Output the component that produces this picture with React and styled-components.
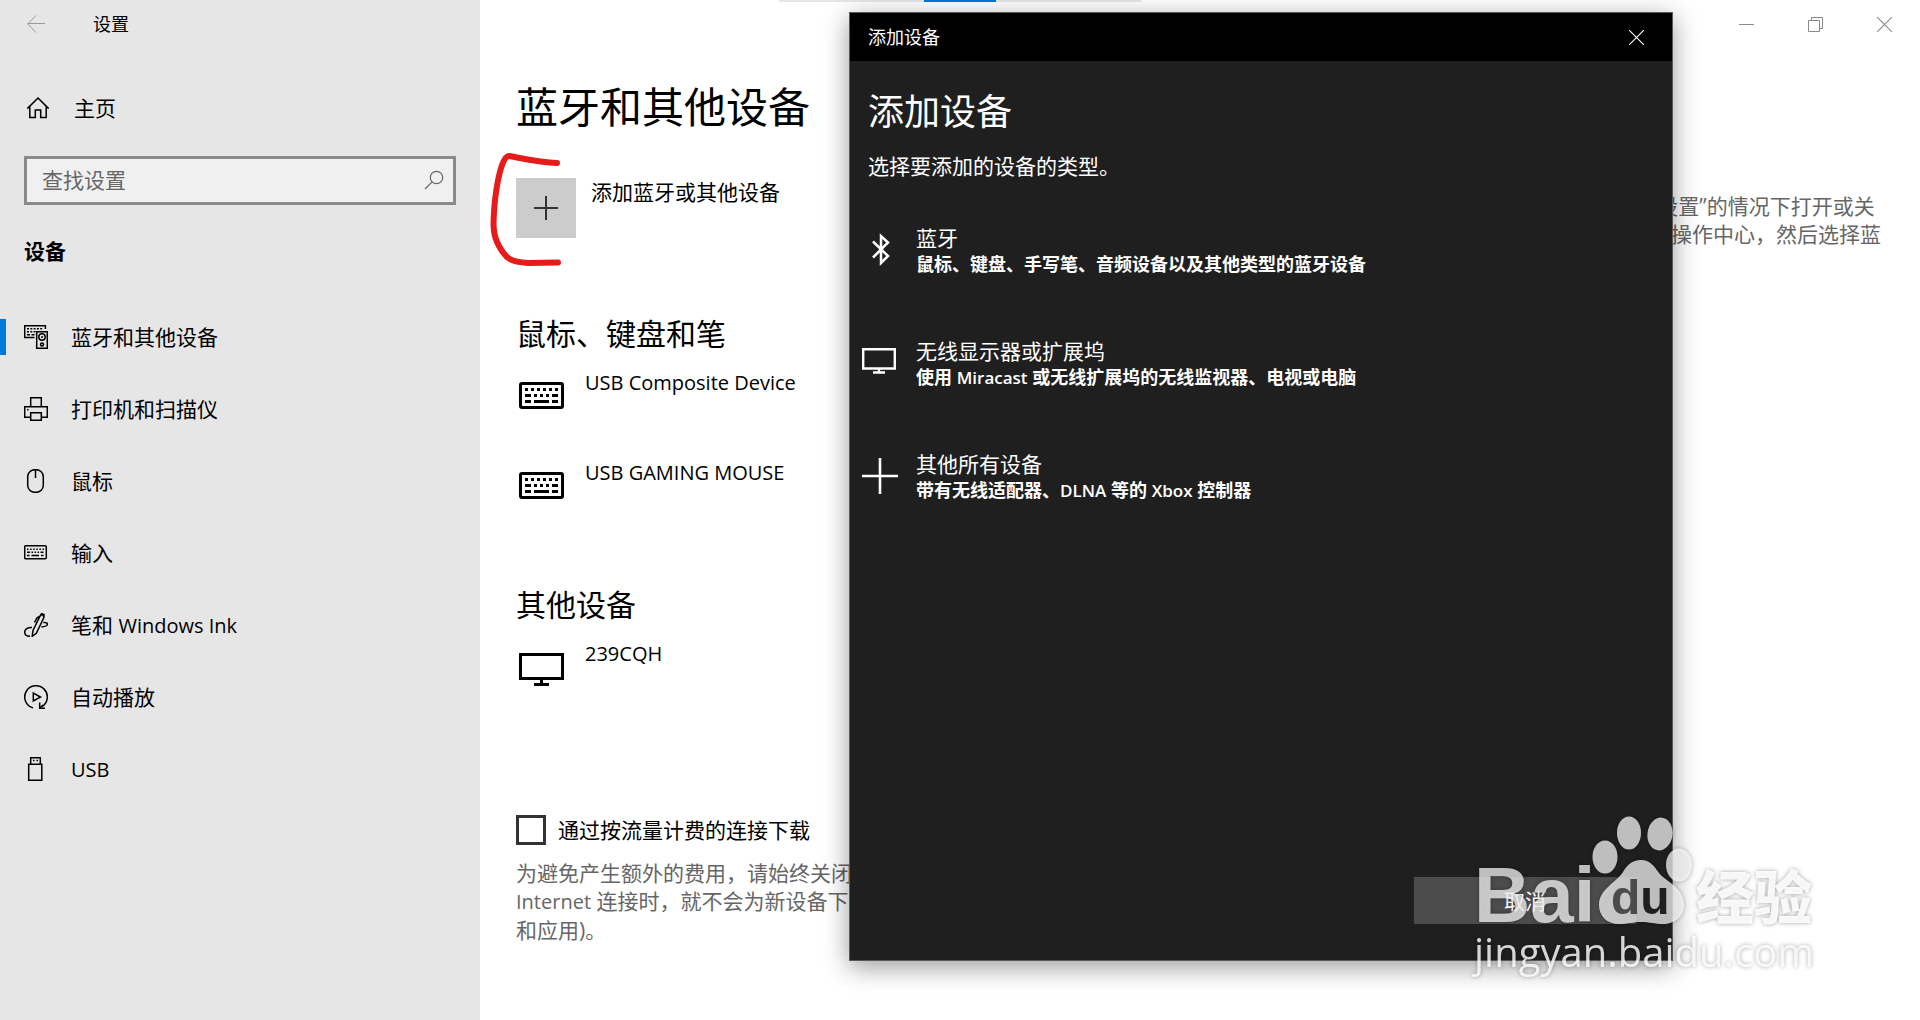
import React, { useState } from 'react';
import styled, { createGlobalStyle } from 'styled-components';

const GlobalStyle = createGlobalStyle`
  * {
    box-sizing: border-box;
  }

  body {
    margin: 0;
    background: #fff;
    color: #000;
    font-family: 'Open Sans', 'Noto Sans CJK SC', sans-serif;
    font-size: 21px;
    line-height: 28px;
  }

  button,
  input {
    font: inherit;
    color: inherit;
  }

  button {
    padding: 0;
    border: 0;
    background: none;
    text-align: left;
  }

  h1, h2, h3, p, ul {
    margin: 0;
    padding: 0;
    font-weight: 400;
  }

  svg {
    display: block;
    flex: none;
  }
`;

const Page = styled.div`
  position: relative;
  display: flex;
  min-height: 100vh;
  overflow: hidden;
`;

const TopStrip = styled.div`
  position: absolute;
  top: 0;
  left: 50%;
  display: flex;
  justify-content: center;
  width: 362px;
  height: 2px;
  margin-left: -181px;
  background: #e6e6e6;
`;

const TopStripThumb = styled.div`
  width: 72px;
  background: #0078d7;
`;

// latin words run a little smaller than the chinese text around them
const Latin = styled.span`
  font-size: 20px;
`;

/* ---------- sidebar ---------- */

const Sidebar = styled.aside`
  flex: 0 0 480px;
  background: #e6e6e6;
`;

const SidebarBar = styled.div`
  display: flex;
  align-items: center;
  gap: 48px;
  height: 48px;
  padding-left: 27px;
  font-size: 18px;
`;

const BackButton = styled.button`
  color: #999;
`;

const HomeLink = styled.a`
  display: flex;
  align-items: center;
  gap: 24px;
  height: 72px;
  margin-top: 24px;
  padding: 0 26px;
  color: #000;
  text-decoration: none;
`;

const SearchBox = styled.label`
  display: flex;
  align-items: center;
  height: 49px;
  margin: 12px 24px 0;
  padding: 0 9px 2px 15px;
  border: 3px solid #8a8a8a;
  background: #f0f0f0;
  color: #666;
`;

const SearchInput = styled.input`
  flex: 1;
  min-width: 0;
  height: 28px;
  padding: 0;
  border: 0;
  outline: 0;
  background: none;

  &::placeholder {
    color: #666;
    opacity: 1;
  }
`;

const SidebarTitle = styled.h2`
  margin: 32px 24px 36px;
  font-size: 21px;
  font-weight: 700;
`;

const NavList = styled.ul`
  list-style: none;
`;

const NavItem = styled.a`
  display: flex;
  align-items: center;
  gap: 18px;
  height: 72px;
  color: #000;
  text-decoration: none;

  &::before {
    content: '';
    width: 6px;
    height: 36px;
    background: ${({ $active }) => ($active ? '#0078d7' : 'transparent')};
  }
`;

const NavLabel = styled.span`
  padding-left: 5px;
`;

/* ---------- main column ---------- */

const Content = styled.div`
  display: flex;
  flex: 1;
  flex-direction: column;
  min-width: 0;
`;

const WindowButtons = styled.div`
  display: flex;
  justify-content: flex-end;
  height: 48px;
  padding-right: 1px;
  color: #8a8a8a;
`;

const WindowButton = styled.button`
  display: flex;
  align-items: center;
  justify-content: center;
  width: 69px;
`;

const Columns = styled.div`
  display: flex;
  gap: 36px;
  padding: 0 36px;
`;

const Main = styled.main`
  flex: 1;
  min-width: 0;
`;

const PageTitle = styled.h1`
  margin-top: 30px;
  font-size: 42px;
  line-height: 58px;
`;

const AddRow = styled.div`
  position: relative;
  margin-top: 42px;
`;

const AddButton = styled.button`
  display: flex;
  gap: 15px;
`;

const AddTile = styled.span`
  display: grid;
  place-items: center;
  width: 60px;
  height: 60px;
  background: #ccc;
  color: #333;
`;

const RedMark = styled.svg`
  position: absolute;
  left: -26px;
  top: -28px;
  pointer-events: none;
`;

const Section = styled.section`
  margin-top: 74px;

  & + & {
    margin-top: 47px;
  }
`;

const SectionTitle = styled.h2`
  font-size: 30px;
  line-height: 44px;
`;

const Device = styled.div`
  display: flex;
  gap: 21px;
  height: 90px;
  padding: 13px 3px 0;
`;

const DeviceIcon = styled.span`
  padding-top: 13px;
`;

const DeviceName = styled.span`
  font-size: 20px;
`;

const Metered = styled.div`
  margin-top: 98px;
`;

const CheckLabel = styled.label`
  display: flex;
  align-items: center;
  gap: 12px;
`;

const Checkbox = styled.input`
  appearance: none;
  width: 30px;
  height: 30px;
  margin: 0;
  border: 3px solid #333;
  background: #fff;

  &:checked {
    background: #0078d7;
  }
`;

const Hint = styled.p`
  margin-top: 14px;
  color: #666;
`;

const Aside = styled.aside`
  flex: 0 0 360px;
  padding-top: 144px;
  color: #666;
`;

/* ---------- add device window ---------- */

const Dialog = styled.section`
  position: absolute;
  top: 12px;
  right: 247px;
  bottom: 59px;
  display: flex;
  flex-direction: column;
  width: 824px;
  border: 1px solid #5a5a5a;
  background: #1f1f1f;
  color: #fff;
  box-shadow: 0 6px 24px rgba(0, 0, 0, 0.4);
`;

const DialogBar = styled.header`
  display: flex;
  align-items: center;
  justify-content: space-between;
  height: 48px;
  padding-left: 18px;
  background: #000;
  font-size: 18px;
`;

const DialogClose = styled(WindowButton)`
  width: 72px;
  height: 48px;
`;

const DialogTitle = styled.h2`
  margin: 27px 18px 0;
  font-size: 36px;
  line-height: 48px;
`;

const DialogText = styled.p`
  margin: 16px 18px 0;
`;

const Options = styled.div`
  display: flex;
  flex-direction: column;
  gap: 61px;
  margin: 44px 12px 0;
`;

const Option = styled.button`
  display: flex;
  align-items: center;
  gap: 18px;
  height: 52px;
`;

const OptionIcon = styled.span`
  display: grid;
  place-items: center;
  width: 36px;
`;

const OptionText = styled.span`
  display: flex;
  flex-direction: column;
`;

const OptionDetail = styled.strong`
  font-size: 18px;
  line-height: 24px;
`;

const DetailLatin = styled.span`
  font-size: 17px;
  font-weight: 600;
`;

const DialogFooter = styled.footer`
  display: flex;
  justify-content: flex-end;
  margin-top: auto;
  padding: 36px;
`;

const CancelButton = styled.button`
  width: 222px;
  height: 47px;
  background: #4c4c4c;
  text-align: center;
`;

/* ---------- watermark ---------- */

const Watermark = styled.div`
  position: absolute;
  right: 102px;
  bottom: 41px;
  width: 344px;
  color: rgba(255, 255, 255, 0.72);
  filter: drop-shadow(0 0 2px rgba(0, 0, 0, 0.4));
  white-space: nowrap;
  pointer-events: none;
`;

const WatermarkLogo = styled.div`
  display: flex;
  align-items: flex-end;
  height: 110px;
`;

const WatermarkBai = styled.span`
  width: 116px;
  font: 700 78px/60px 'Liberation Sans', sans-serif;
`;

const WatermarkName = styled.span`
  font: 900 58px/62px 'Noto Sans CJK SC', sans-serif;
  color: rgba(255, 255, 255, 0.9);
`;

const WatermarkUrl = styled.div`
  font-size: 40px;
  line-height: 54px;
  color: rgba(255, 255, 255, 0.82);
`;

/* ---------- icons ---------- */

const Icon = ({ size = 24, children, ...rest }) => (
  <svg
    width={size}
    height={size}
    viewBox={`0 0 ${size} ${size}`}
    fill="none"
    stroke="currentColor"
    strokeWidth="1.5"
    aria-hidden="true"
    {...rest}
  >
    {children}
  </svg>
);

const BackIcon = () => (
  <Icon size={18} strokeWidth="1">
    <path d="M9 .5 .7 9 9 17.5M.7 8.5H18" />
  </Icon>
);

const HomeIcon = () => (
  <Icon>
    <path d="M1.3 12.6 12 2l10.7 10.6M3.8 10.3V21.4H9.3V14H14.7V21.4H20.2V10.3" />
  </Icon>
);

const SearchIcon = () => (
  <Icon size={20} strokeWidth="1.2">
    <circle cx="12.5" cy="7.5" r="6.2" />
    <path d="M8.1 11.9 1 19" />
  </Icon>
);

const DevicesIcon = () => (
  <Icon>
    <path d="M10.5 12.5H.7V.7H21.4V4M12.7 6.7H23.3V23.3H12.7Z" />
    <circle cx="18" cy="12" r="3.2" />
    <circle cx="18" cy="19.5" r="1.5" />
    <path d="M18 11v2" />
    <path d="M3 3.7h16M3 6.7h8.5" strokeDasharray="2 1.3" />
    <path d="M3 9.7h3M7.5 9.7h3" />
  </Icon>
);

const PrinterIcon = () => (
  <Icon>
    <path d="M6.7 9.5V.7H17.3V9.5M6.7 20.3H.7V9.7H23.3V20.3H17.3M6.7 15.7H17.3V23.3H6.7Z" />
    <path d="M3 12.7h1.5" />
  </Icon>
);

const MouseIcon = () => (
  <Icon>
    <rect x="3.7" y=".7" width="15.6" height="22.6" rx="7" />
    <path d="M11.5 1v8" />
  </Icon>
);

const SmallKeyboardIcon = () => (
  <Icon>
    <rect x=".7" y="4.7" width="21.6" height="13" rx="1" />
    <path d="M3 8.2h17" strokeDasharray="1.5 1.6" />
    <path d="M3 11.2h3M7.5 11.2h1.5M10.5 11.2h1.5M13.5 11.2h1.5M16.5 11.2h3M3 14.4h2.5M7.5 14.4h7.5M17 14.4h2.5" />
  </Icon>
);

const InkIcon = () => (
  <Icon>
    <path d="M8 14.5C3.5 14.2.7 16.5.7 19.3.7 21.8 2.8 23.3 6 23.3" />
    <path d="M8.2 23.3 9 17.5 16 3.2C17 1 20.8 1.5 19.8 4.8L12.3 20.3Z" />
    <path d="M10.5 9.5 13 4.800 16 3.2M16.500 2.500 17.5.7 20 1.5 19.3 4" />
    <path d="M19.3 9.5c3.2-.5 4.3 1 4 2.3-.4 1.600-2.500 1.700-5.800 2.200" />
  </Icon>
);

const AutoplayIcon = () => (
  <Icon>
    <path d="M9 22.9A11.3 11.3 0 1 1 17.5 21.9" />
    <path d="M15.7 17.5V23.3H21M15.7 23.3 19 20" />
    <path d="M9.3 8v8l7.2-4Z" />
  </Icon>
);

const UsbIcon = () => (
  <Icon>
    <path d="M6.7 6.5V.7H16.3V6.5M4.7 7.2H17.8V23.3H4.7Z" />
    <path d="M9 3.5h1.5M12.5 3.5h1.5" />
  </Icon>
);

const KeyboardIcon = () => (
  <svg width="45" height="27" viewBox="0 0 45 27" aria-hidden="true">
    <rect x="1.5" y="1.5" width="42" height="24" rx="1.5" fill="none" stroke="#000" strokeWidth="3" />
    <path
      d="M6 7.5h3M12 7.5h3M18 7.5h3M24 7.5h3M30 7.5h3M36 7.5h3M6 13.5h6M15 13.5h3M21 13.5h3M27 13.5h3M33 13.5h6M6 19.5h6M15 19.5h15M33 19.5h6"
      stroke="#000"
      strokeWidth="3"
    />
  </svg>
);

const MonitorIcon = () => (
  <svg width="45" height="33" viewBox="0 0 45 33" fill="none" stroke="#000" strokeWidth="3" aria-hidden="true">
    <path d="M1.5 1.5H43.5V25.5H1.5ZM22.5 25.5V31M15 31.5H30" />
  </svg>
);

const PlusIcon = () => (
  <Icon strokeWidth="2">
    <path d="M12 0V24M0 12H24" />
  </Icon>
);

const CloseIcon = () => (
  <Icon size={15} strokeWidth="1.1">
    <path d="M0 0 15 15M15 0 0 15" />
  </Icon>
);

const RestoreIcon = () => (
  <Icon size={15} strokeWidth="1">
    <path d="M.5 3.5h11v11H.5ZM3.5 3.5V.5h11v11h-3" />
  </Icon>
);

const MinimizeIcon = () => (
  <Icon size={15} strokeWidth="1">
    <path d="M0 7.5H15" />
  </Icon>
);

const BluetoothOptionIcon = () => (
  <Icon size={36} strokeWidth="2.5">
    <path d="M11 9.5 26 24 19 31V4L26 10.5 11 25.5" />
  </Icon>
);

const MonitorOptionIcon = () => (
  <Icon size={36} strokeWidth="2.4">
    <path d="M1.2 4.200H32.800V23.500H1.200ZM17 23.500V27M11 27.500H23" />
  </Icon>
);

const PlusOptionIcon = () => (
  <Icon size={36} strokeWidth="2.6">
    <path d="M18 0V36M0 18H36" />
  </Icon>
);

const PawIcon = () => (
  <svg width="106" height="110" viewBox="0 0 106 110" fill="currentColor">
    <ellipse cx="15" cy="42" rx="12.5" ry="16.5" />
    <ellipse cx="39" cy="18" rx="12" ry="16.5" />
    <ellipse cx="70" cy="19" rx="12.5" ry="16.5" transform="rotate(8 70 19)" />
    <ellipse cx="89" cy="50" rx="13" ry="16.5" />
    <path d="M51 45C60 45 64 51 69 58 76 67 94 72 94 90 94 102 84 109 73 109 65 109 60 107 51 107 43 107 38 109 29 109 17 109 9 101 9 90 9 74 26 68 33 57 37 50 42 45 51 45Z" />
    <text x="21" y="99" fontFamily="Liberation Sans, sans-serif" fontSize="48" fontWeight="700">
      <tspan fill="#4b4b4b">d</tspan>
      <tspan fill="#1f1f1f">u</tspan>
    </text>
  </svg>
);

const navItems = [
  { label: '蓝牙和其他设备', icon: DevicesIcon, active: true },
  { label: '打印机和扫描仪', icon: PrinterIcon },
  { label: '鼠标', icon: MouseIcon },
  { label: '输入', icon: SmallKeyboardIcon },
  { label: '笔和 ', latin: 'Windows Ink', icon: InkIcon },
  { label: '自动播放', icon: AutoplayIcon },
  { label: '', latin: 'USB', icon: UsbIcon },
];

const options = [
  {
    title: '蓝牙',
    detail: '鼠标、键盘、手写笔、音频设备以及其他类型的蓝牙设备',
    icon: BluetoothOptionIcon,
  },
  {
    title: '无线显示器或扩展坞',
    detail: (
      <>
        使用 <DetailLatin>Miracast</DetailLatin> 或无线扩展坞的无线监视器、电视或电脑
      </>
    ),
    icon: MonitorOptionIcon,
  },
  {
    title: '其他所有设备',
    detail: (
      <>
        带有无线适配器、<DetailLatin>DLNA</DetailLatin> 等的 <DetailLatin>Xbox</DetailLatin> 控制器
      </>
    ),
    icon: PlusOptionIcon,
  },
];

const App = () => {
  const [metered, setMetered] = useState(false);

  return (
    <Page lang="zh-CN">
      <GlobalStyle />
      <Sidebar>
        <SidebarBar>
          <BackButton aria-label="返回">
            <BackIcon />
          </BackButton>
          <span>设置</span>
        </SidebarBar>
        <HomeLink href="#home">
          <HomeIcon />
          主页
        </HomeLink>
        <SearchBox>
          <SearchInput type="text" placeholder="查找设置" aria-label="查找设置" />
          <SearchIcon />
        </SearchBox>
        <SidebarTitle>设备</SidebarTitle>
        <nav>
          <NavList>
            {navItems.map(({ label, latin, icon: ItemIcon, active }) => (
              <li key={label}>
                <NavItem href="#settings" $active={active}>
                  <ItemIcon />
                  <NavLabel>
                    {label}
                    {latin && <Latin>{latin}</Latin>}
                  </NavLabel>
                </NavItem>
              </li>
            ))}
          </NavList>
        </nav>
      </Sidebar>

      <Content>
        <WindowButtons>
          <WindowButton aria-label="最小化">
            <MinimizeIcon />
          </WindowButton>
          <WindowButton aria-label="还原">
            <RestoreIcon />
          </WindowButton>
          <WindowButton aria-label="关闭">
            <CloseIcon />
          </WindowButton>
        </WindowButtons>
        <Columns>
          <Main>
            <PageTitle>蓝牙和其他设备</PageTitle>
            <AddRow>
              <AddButton>
                <AddTile>
                  <PlusIcon />
                </AddTile>
                添加蓝牙或其他设备
              </AddButton>
              <RedMark width="80" height="120" viewBox="0 0 80 120" fill="none">
                <path
                  d="M67 13C50 12.5 38 9.5 19 6 13 5.5 8 25 5 50 3 72 2 84 9 96 16 109 21 112 38 113L68 112.5"
                  stroke="#e81b1b"
                  strokeWidth="6"
                  strokeLinecap="round"
                  strokeLinejoin="round"
                />
              </RedMark>
            </AddRow>

            <Section>
              <SectionTitle>鼠标、键盘和笔</SectionTitle>
              <Device>
                <DeviceIcon>
                  <KeyboardIcon />
                </DeviceIcon>
                <DeviceName>USB Composite Device</DeviceName>
              </Device>
              <Device>
                <DeviceIcon>
                  <KeyboardIcon />
                </DeviceIcon>
                <DeviceName>USB GAMING MOUSE</DeviceName>
              </Device>
            </Section>

            <Section>
              <SectionTitle>其他设备</SectionTitle>
              <Device>
                <DeviceIcon>
                  <MonitorIcon />
                </DeviceIcon>
                <DeviceName>239CQH</DeviceName>
              </Device>
            </Section>

            <Metered>
              <CheckLabel>
                <Checkbox
                  type="checkbox"
                  checked={metered}
                  onChange={(e) => setMetered(e.target.checked)}
                />
                通过按流量计费的连接下载
              </CheckLabel>
              <Hint>
                为避免产生额外的费用，请始终关闭此选项，这样在你通过按流量计费的
                <br />
                <Latin>Internet</Latin> 连接时，就不会为新设备下载设备软件(驱动程序、信息
                <br />
                和应用)。
              </Hint>
            </Metered>
          </Main>
          <Aside>
            若要在不打开“设置”的情况下打开或关闭蓝牙，请打开操作中心，然后选择蓝牙图标。
          </Aside>
        </Columns>
      </Content>

      <TopStrip>
        <TopStripThumb />
      </TopStrip>

      <Dialog role="dialog" aria-label="添加设备">
        <DialogBar>
          <span>添加设备</span>
          <DialogClose aria-label="关闭">
            <CloseIcon />
          </DialogClose>
        </DialogBar>
        <DialogTitle>添加设备</DialogTitle>
        <DialogText>选择要添加的设备的类型。</DialogText>
        <Options>
          {options.map(({ title, detail, icon: OptIcon }) => (
            <Option key={title}>
              <OptionIcon>
                <OptIcon />
              </OptionIcon>
              <OptionText>
                <span>{title}</span>
                <OptionDetail>{detail}</OptionDetail>
              </OptionText>
            </Option>
          ))}
        </Options>
        <DialogFooter>
          <CancelButton>取消</CancelButton>
        </DialogFooter>
      </Dialog>

      <Watermark>
        <WatermarkLogo>
          <WatermarkBai>Bai</WatermarkBai>
          <PawIcon />
          <WatermarkName>经验</WatermarkName>
        </WatermarkLogo>
        <WatermarkUrl>jingyan.baidu.com</WatermarkUrl>
      </Watermark>
    </Page>
  );
};

export default App;
